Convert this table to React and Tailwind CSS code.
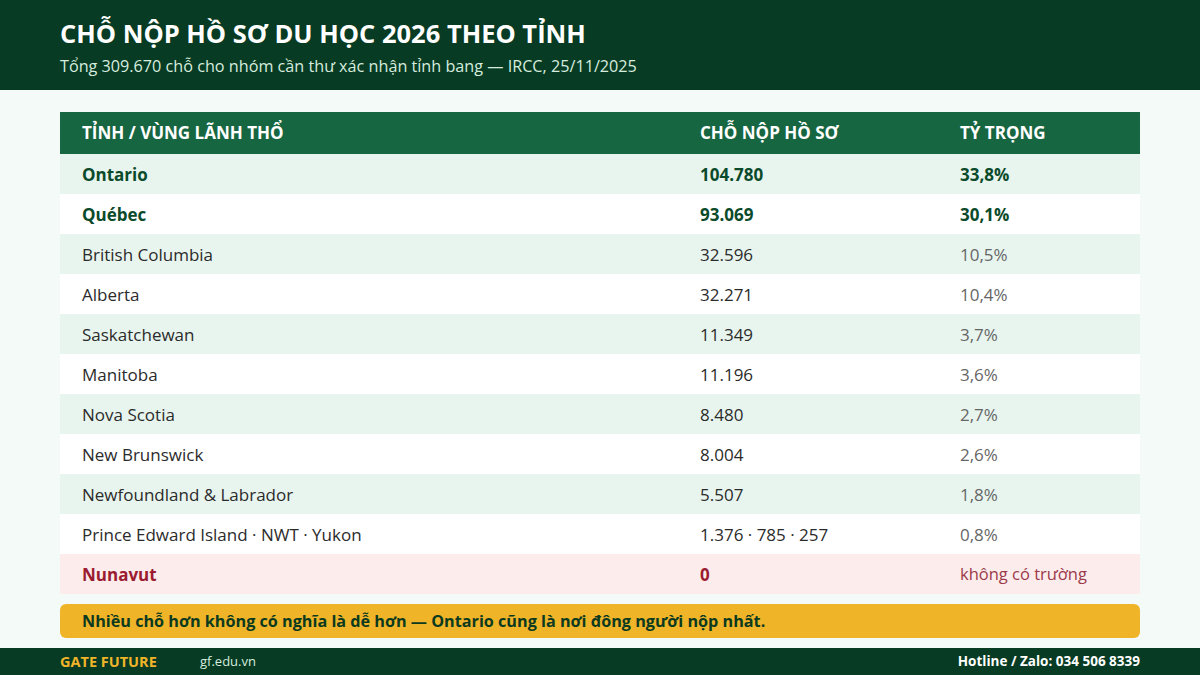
import React from 'react'

const rows = [
  { name: 'Ontario', seats: '104.780', share: '33,8%', kind: 'top' },
  { name: 'Québec', seats: '93.069', share: '30,1%', kind: 'top' },
  { name: 'British Columbia', seats: '32.596', share: '10,5%' },
  { name: 'Alberta', seats: '32.271', share: '10,4%' },
  { name: 'Saskatchewan', seats: '11.349', share: '3,7%' },
  { name: 'Manitoba', seats: '11.196', share: '3,6%' },
  { name: 'Nova Scotia', seats: '8.480', share: '2,7%' },
  { name: 'New Brunswick', seats: '8.004', share: '2,6%' },
  { name: 'Newfoundland & Labrador', seats: '5.507', share: '1,8%' },
  { name: 'Prince Edward Island · NWT · Yukon', seats: '1.376 · 785 · 257', share: '0,8%' },
  { name: 'Nunavut', seats: '0', share: 'không có trường', kind: 'none' },
]

function Row({ row, i }) {
  const bg =
    row.kind === 'none' ? 'bg-[#fcecec]' : i % 2 === 0 ? 'bg-[#e8f5ee]' : 'bg-white'
  if (row.kind === 'top') {
    return (
      <div className={`flex h-[40px] items-center pt-[1px] text-[17px] font-bold text-[#0b4a2a] ${bg}`}>
        <div className="w-[640px] pl-[22px]">{row.name}</div>
        <div className="w-[260px]">{row.seats}</div>
        <div>{row.share}</div>
      </div>
    )
  }
  if (row.kind === 'none') {
    return (
      <div className={`flex h-[40px] items-center pt-[1px] text-[17px] ${bg}`}>
        <div className="w-[640px] pl-[22px] font-bold text-[#9b1b30]">{row.name}</div>
        <div className="w-[260px] font-bold text-[#9b1b30]">{row.seats}</div>
        <div className="text-[16.5px] text-[#9b3a4a]">{row.share}</div>
      </div>
    )
  }
  return (
    <div className={`flex h-[40px] items-center pt-[1px] text-[17px] ${bg}`}>
      <div className="w-[640px] pl-[22px] text-[#2b2b2b]">{row.name}</div>
      <div className="w-[260px] text-[#2b2b2b]">{row.seats}</div>
      <div className="text-[#666666]">{row.share}</div>
    </div>
  )
}

export default function App() {
  return (
    <div className="flex h-[675px] w-[1200px] flex-col bg-[#f3faf7] font-['Open_Sans',sans-serif]">
      <div className="h-[90px] bg-[#073b23] px-[60px] pt-[14px]">
        <h1 className="text-[25.5px] font-bold leading-[38px] text-white">
          CHỖ NỘP HỒ SƠ DU HỌC 2026 THEO TỈNH
        </h1>
        <p className="mt-[2px] text-[16.2px] leading-[24px] text-[#d6ecdf]">
          Tổng 309.670 chỗ cho nhóm cần thư xác nhận tỉnh bang — IRCC, 25/11/2025
        </p>
      </div>

      <div className="flex-1 px-[60px] pt-[22px]">
        <div className="flex h-[42px] items-center bg-[#176642] text-[17px] font-bold text-white">
          <div className="w-[640px] pl-[22px]">TỈNH / VÙNG LÃNH THỔ</div>
          <div className="w-[260px]">CHỖ NỘP HỒ SƠ</div>
          <div>TỶ TRỌNG</div>
        </div>
        {rows.map((row, i) => (
          <Row key={row.name} row={row} i={i} />
        ))}
        <div className="mt-[10px] flex h-[34px] items-center rounded-[6px] bg-[#f0b429] pl-[22px] text-[16.2px] font-bold text-[#0b3a1f]">
          Nhiều chỗ hơn không có nghĩa là dễ hơn — Ontario cũng là nơi đông người nộp nhất.
        </div>
      </div>

      <div className="flex h-[27px] items-center bg-[#073b23] px-[60px]">
        <span className="w-[140px] text-[14.5px] font-bold text-[#f0b429]">GATE FUTURE</span>
        <span className="text-[13px] text-[#d6ecdf]">gf.edu.vn</span>
        <span className="ml-auto text-[13.5px] font-bold text-white">Hotline / Zalo: 034 506 8339</span>
      </div>
    </div>
  )
}
